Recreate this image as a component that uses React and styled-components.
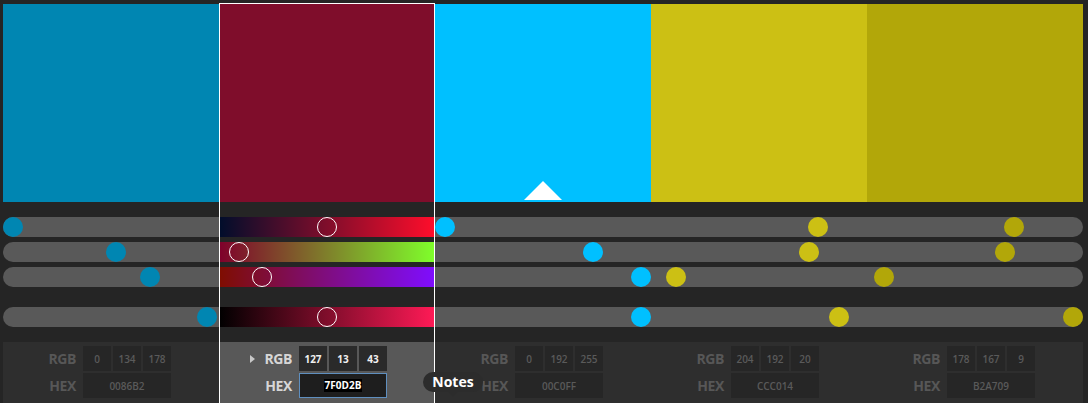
import styled, { createGlobalStyle, css } from 'styled-components'

const GlobalStyle = createGlobalStyle`
  html, body {
    margin: 0;
    padding: 0;
    background: #252525;
    font-family: "Open Sans", "Liberation Sans", sans-serif;
  }
`

const colors = [
  { hex: '0086B2', rgb: [0, 134, 178], knobs: [0, 134 / 255, 178 / 255, 0.99] },
  { hex: '7F0D2B', rgb: [127, 13, 43], knobs: [127 / 255, 13 / 255, 43 / 255, 0.498], selected: true },
  { hex: '00C0FF', rgb: [0, 192, 255], knobs: [0, 192 / 255, 1, 1], marker: true },
  { hex: 'CCC014', rgb: [204, 192, 20], knobs: [0.8, 192 / 255, 20 / 255, 0.91] },
  { hex: 'B2A709', rgb: [178, 167, 9], knobs: [178 / 255, 167 / 255, 9 / 255, 1] }
]

// gradients shown on the selected colour's sliders (R, G, B, brightness)
const gradients = [
  'linear-gradient(to right, rgb(0,13,43), rgb(255,13,43))',
  'linear-gradient(to right, rgb(127,0,43), rgb(127,255,43))',
  'linear-gradient(to right, rgb(127,13,0), rgb(127,13,255))',
  'linear-gradient(to right, #000, rgb(255,26,86))'
]

const App = () => {
  const last = colors.length - 1

  return (
    <Page>
      <GlobalStyle />
      <Columns>
        {colors.map((c, i) => (
          <Column key={c.hex} $selected={c.selected}>
            <Swatch $color={`#${c.hex}`}>{c.marker && <Marker />}</Swatch>

            <Tracks>
              {c.knobs.map((v, j) => (
                <Track
                  key={j}
                  $first={i === 0}
                  $last={i === last}
                  $spaced={j === 3}
                  $bg={c.selected ? gradients[j] : '#595959'}
                >
                  <Knob
                    $selected={c.selected}
                    $color={`#${c.hex}`}
                    style={{ left: `${v * 196}px` }}
                  />
                </Track>
              ))}
            </Tracks>

            <Panel $selected={c.selected}>
              <Fields>
                <Label $selected={c.selected}>
                  {c.selected && <Caret />}
                  RGB
                </Label>
                <Boxes>
                  {c.rgb.map((n, k) => (
                    <Box key={k} $selected={c.selected}>{n}</Box>
                  ))}
                </Boxes>
                <Label $selected={c.selected}>HEX</Label>
                <HexBox $selected={c.selected}>
                  {c.selected ? <Highlight>{c.hex}</Highlight> : c.hex}
                </HexBox>
              </Fields>
            </Panel>
          </Column>
        ))}
      </Columns>

      <Tooltip>Notes</Tooltip>
    </Page>
  )
}

export default App

// ---------- styled-components ----------

const Page = styled.div`
  position: relative;
  width: 1088px;
  height: 403px;
  overflow: hidden;
  background: #252525;
`

const Columns = styled.div`
  display: flex;
  padding: 3px 5px 0 3px;
`

const Column = styled.div`
  position: relative;
  width: 216px;
  height: 412px;
  display: flex;
  flex-direction: column;

  ${(p) =>
    p.$selected &&
    css`
      &::after {
        content: '';
        position: absolute;
        inset: 0;
        border: 1px solid #fff;
        pointer-events: none;
        z-index: 3;
      }
    `}
`

const Swatch = styled.div`
  position: relative;
  height: 198px;
  margin-top: 1px;
  background: ${(p) => p.$color};
`

const Marker = styled.div`
  position: absolute;
  left: 50%;
  bottom: 2px;
  margin-left: -19px;
  width: 0;
  height: 0;
  border-left: 19px solid transparent;
  border-right: 19px solid transparent;
  border-bottom: 19px solid #fff;
`

const Tracks = styled.div`
  display: flex;
  flex-direction: column;
  gap: 5px;
  margin-top: 15px;
`

const Track = styled.div`
  position: relative;
  height: 20px;
  background: ${(p) => p.$bg};
  border-radius: ${(p) => (p.$first ? '10px 0 0 10px' : p.$last ? '0 10px 10px 0' : '0')};
  margin-top: ${(p) => (p.$spaced ? '15px' : '0')};
`

const Knob = styled.div`
  position: absolute;
  top: 0;
  width: 20px;
  height: 20px;
  box-sizing: border-box;
  border-radius: 50%;
  z-index: 2;
  background: ${(p) => (p.$selected ? 'transparent' : p.$color)};
  border: ${(p) => (p.$selected ? '1.5px solid #fff' : 'none')};
`

const Panel = styled.div`
  flex: 1;
  margin-top: 15px;
  padding-top: 4px;
  background: ${(p) => (p.$selected ? '#585858' : '#2e2e2e')};
`

const Fields = styled.div`
  display: grid;
  grid-template-columns: 73px 88px;
  grid-auto-rows: 25px;
  column-gap: 7px;
  row-gap: 2px;
`

const Label = styled.div`
  display: flex;
  align-items: center;
  justify-content: flex-end;
  gap: 9px;
  font-size: 14px;
  font-weight: 700;
  letter-spacing: -0.4px;
  color: ${(p) => (p.$selected ? '#d6d6d6' : '#575757')};
`

const Caret = styled.span`
  width: 0;
  height: 0;
  border-top: 4px solid transparent;
  border-bottom: 4px solid transparent;
  border-left: 5px solid #c8c8c8;
`

const Boxes = styled.div`
  display: grid;
  grid-template-columns: repeat(3, 28px);
  column-gap: 2px;
`

const Box = styled.div`
  display: flex;
  align-items: center;
  justify-content: center;
  background: ${(p) => (p.$selected ? '#2a2a2a' : '#262626')};
  color: ${(p) => (p.$selected ? '#f0f0f0' : '#5a5a5a')};
  font-size: 10px;
  font-weight: ${(p) => (p.$selected ? 700 : 600)};
`

const HexBox = styled.div`
  display: flex;
  align-items: center;
  justify-content: center;
  box-sizing: border-box;
  background: ${(p) => (p.$selected ? '#1e1e1e' : '#262626')};
  border: ${(p) => (p.$selected ? '1px solid #5f8fbf' : 'none')};
  color: ${(p) => (p.$selected ? '#fff' : '#5a5a5a')};
  font-size: 10px;
  font-weight: ${(p) => (p.$selected ? 700 : 600)};
`

const Highlight = styled.span`
  background: #000;
  padding: 0 1px;
  line-height: 13px;
`

const Tooltip = styled.div`
  position: absolute;
  left: 423px;
  top: 372px;
  width: 60px;
  height: 20px;
  border-radius: 10px;
  background: #2c2c2c;
  color: #fff;
  font-size: 14px;
  font-weight: 700;
  line-height: 20px;
  text-align: center;
  z-index: 4;

  &::after {
    content: '';
    position: absolute;
    left: 25px;
    top: 20px;
    border-left: 5px solid transparent;
    border-right: 5px solid transparent;
    border-top: 5px solid #2c2c2c;
  }
`
